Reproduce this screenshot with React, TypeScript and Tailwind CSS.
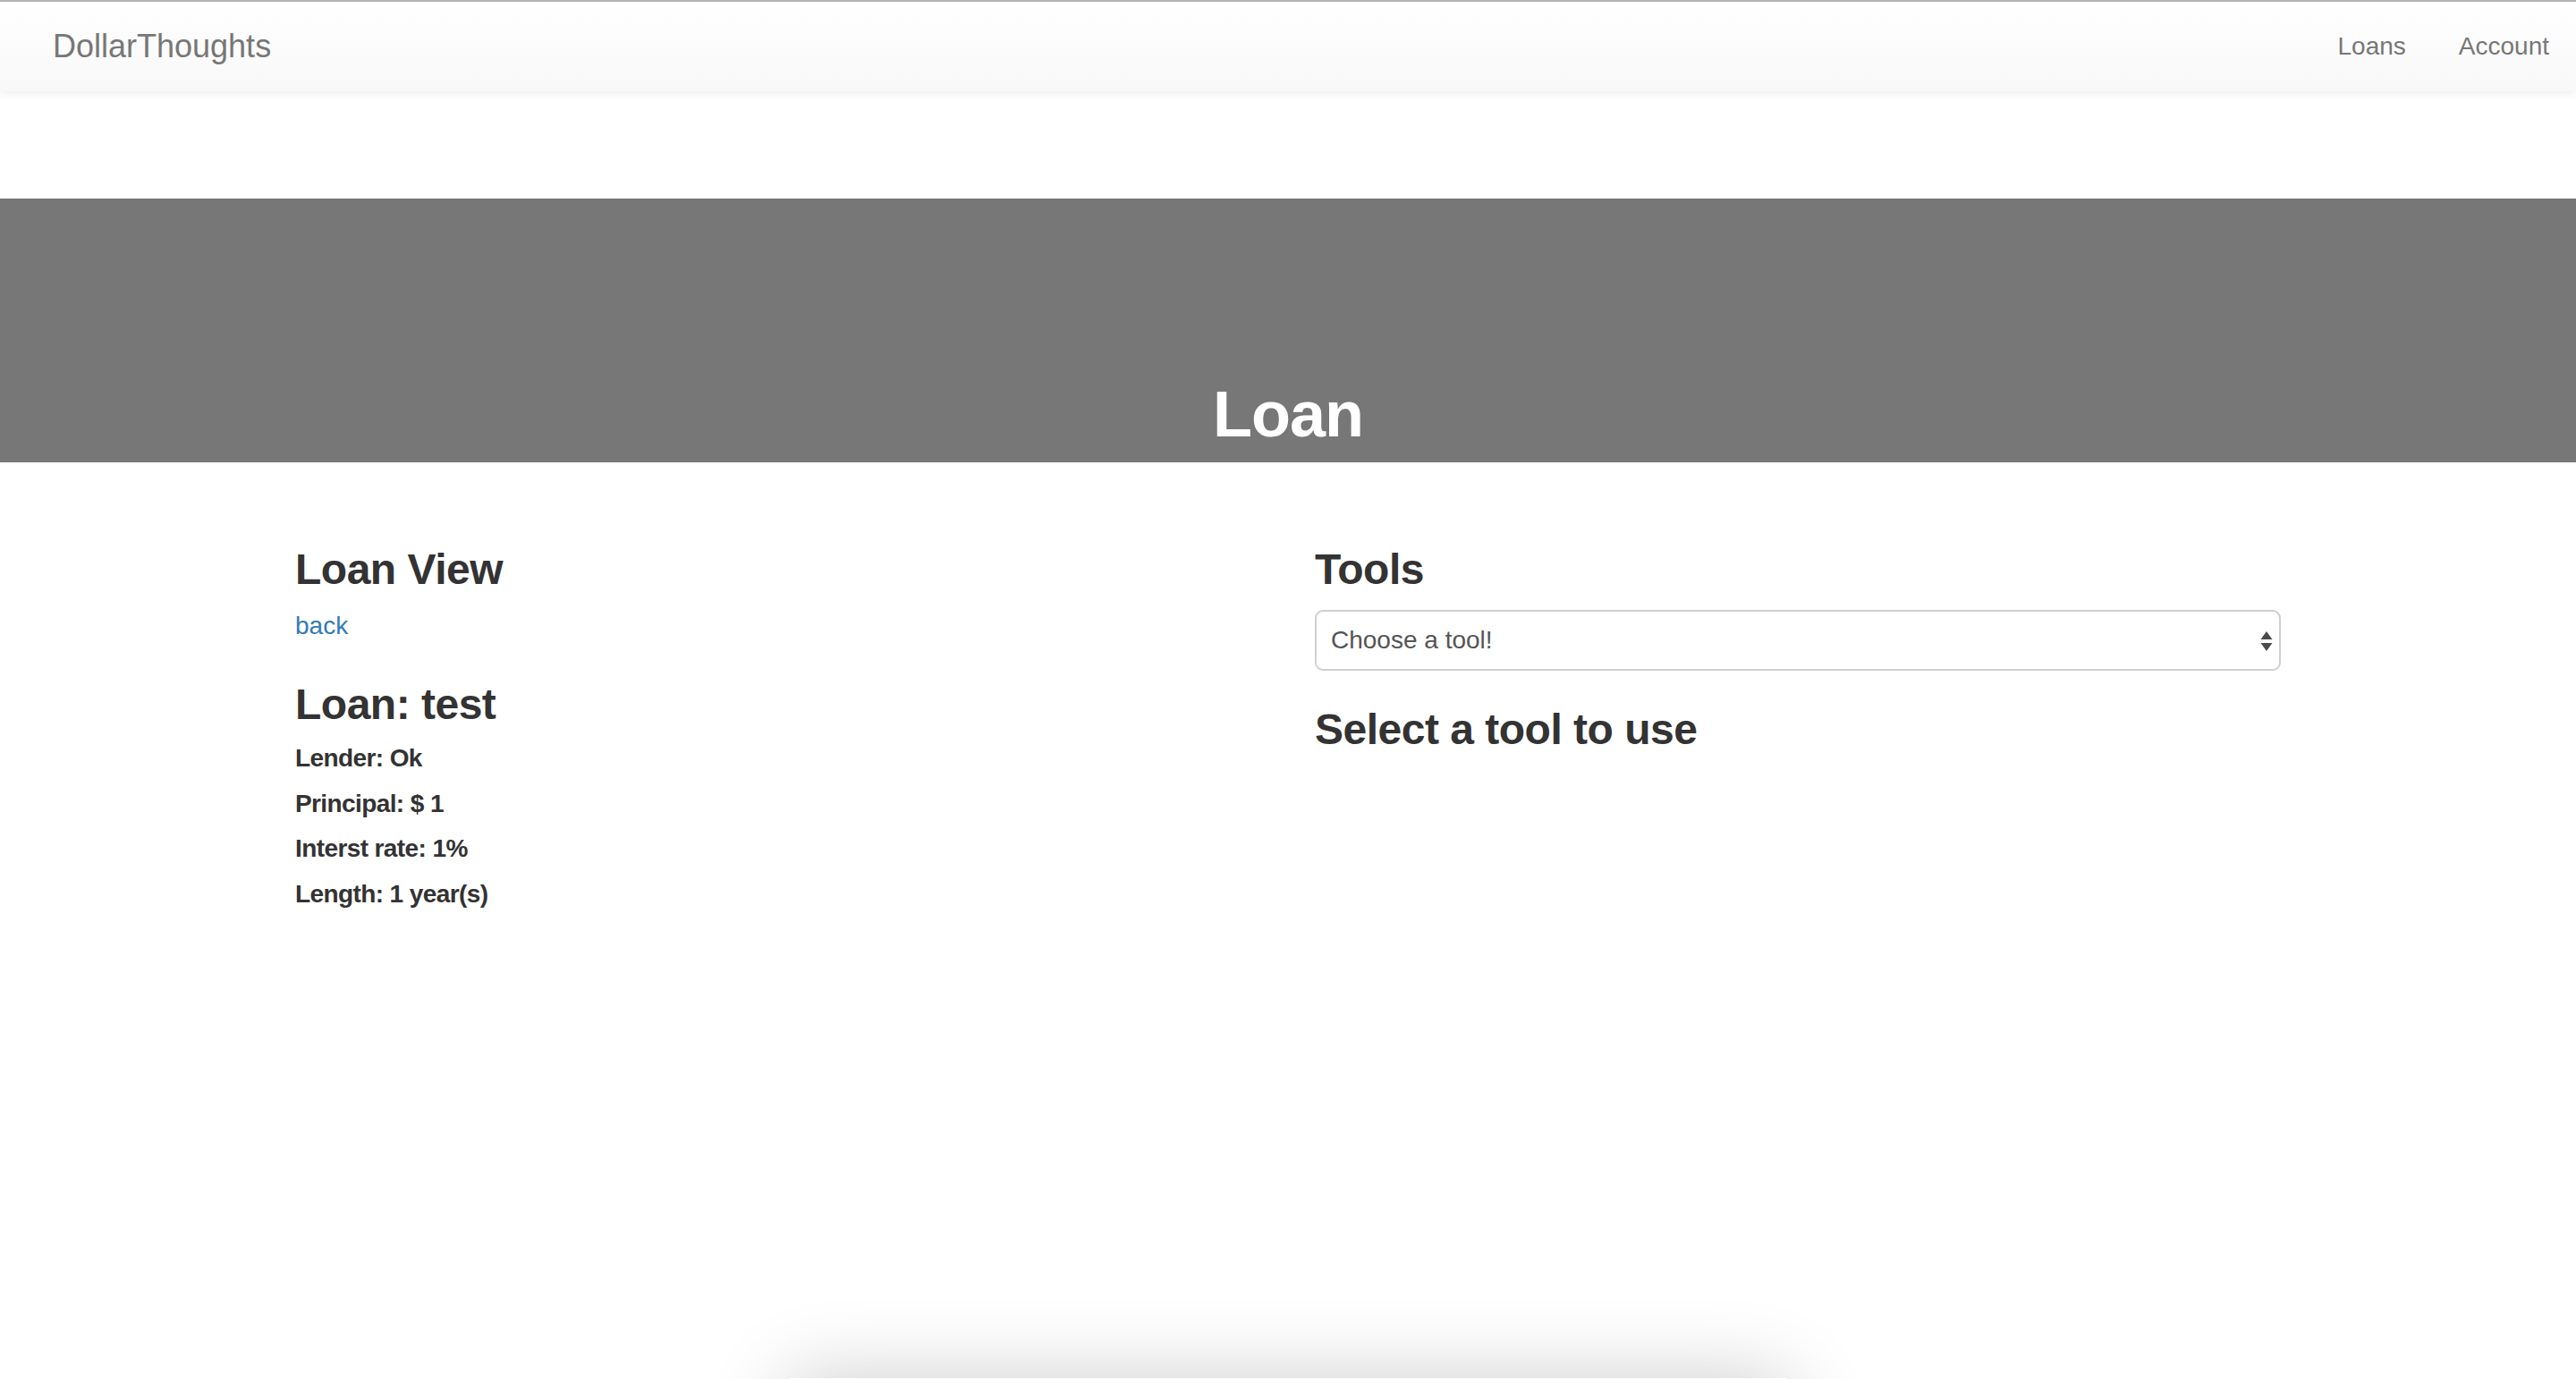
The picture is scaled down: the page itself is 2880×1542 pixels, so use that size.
import { ChangeEvent, useState } from "react";

const font = { fontFamily: '"Liberation Sans", Arial, sans-serif' };

const details = ["Lender: Ok", "Principal: $ 1", "Interst rate: 1%", "Length: 1 year(s)"];

const Navbar = () => (
  <nav className="h-[102px] border-t-2 border-[#b4b4b4] bg-gradient-to-b from-white to-[#f8f8f8] shadow-[0_2px_10px_rgba(0,0,0,0.08)] flex items-center justify-between">
    <a className="pl-[59px] text-[36px] leading-[100px] text-[#777]">DollarThoughts</a>
    <ul className="flex">
      <li className="px-[29px] text-[28px] leading-[100px] text-[#777]">Loans</li>
      <li className="px-[30px] text-[28px] leading-[100px] text-[#777]">Account</li>
    </ul>
  </nav>
);

const ToolSelect = () => {
  const [tool, setTool] = useState("");

  return (
    <div className="relative mt-[19px]">
      <select
        value={tool}
        onChange={(e: ChangeEvent<HTMLSelectElement>) => setTool(e.target.value)}
        className="appearance-none w-full h-[68px] border-2 border-[#cfcfcf] rounded-[9px] bg-white pl-[16px] text-[28px] text-[#555] outline-none"
        style={font}
      >
        <option value="">Choose a tool!</option>
        <option value="amortization">Amortization</option>
        <option value="payoff">Payoff</option>
      </select>
      {/* arrows */}
      <svg
        className="absolute right-[9px] top-[24px] pointer-events-none"
        width="14"
        height="24"
        viewBox="0 0 14 24"
      >
        <path d="M7 0 L13.5 9 L0.5 9 Z" fill="#4a4a4a" />
        <path d="M0.5 13 L13.5 13 L7 22 Z" fill="#4a4a4a" />
      </svg>
    </div>
  );
};

export default function App() {
  return (
    <div className="relative min-h-screen overflow-hidden bg-white text-[#333]" style={font}>
      <Navbar />

      {/* 헤더 */}
      <div className="mt-[120px] h-[295px] bg-[#777] flex flex-col justify-end items-center">
        <h1 className="mb-[14px] text-[72px] leading-[80px] font-bold tracking-[-1px] text-white">Loan</h1>
      </div>

      <div className="mx-auto w-[2280px] grid grid-cols-2">
        <div className="px-[30px]">
          <h3 className="mt-[94px] text-[48px] leading-[52px] font-bold tracking-[-0.5px]">Loan View</h3>
          <a className="block mt-[17px] text-[28px] leading-[40px] text-[#337ab7]">back</a>
          <h3 className="mt-[42px] text-[48px] leading-[52px] font-bold tracking-[-0.5px]">Loan: test</h3>
          <div className="mt-[18px] flex flex-col gap-[19.5px]">
            {details.map((d) => (
              <h5 key={d} className="text-[28px] leading-[31px] font-bold tracking-[-0.6px]">
                {d}
              </h5>
            ))}
          </div>
        </div>

        <div className="px-[30px]">
          <h3 className="mt-[94px] text-[48px] leading-[52px] font-bold tracking-[-0.5px]">Tools</h3>
          <ToolSelect />
          <h3 className="mt-[40px] text-[48px] leading-[52px] font-bold tracking-[-0.5px]">Select a tool to use</h3>
        </div>
      </div>

      {/* bottom shadow */}
      <div className="absolute left-[880px] top-[1541px] w-[1120px] h-[200px] bg-white shadow-[0_0_90px_rgba(0,0,0,0.2)]" />
    </div>
  );
}
